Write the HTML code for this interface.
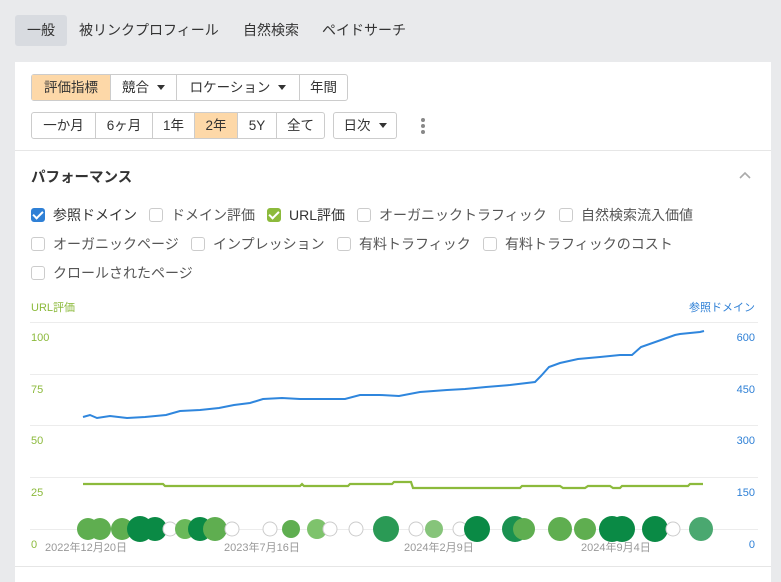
<!DOCTYPE html>
<html><head><meta charset="utf-8"><style>
body{margin:0;width:781px;height:578px;background:#e9eaec;font-family:"Liberation Sans","Noto Sans CJK JP",sans-serif;position:relative;overflow:hidden;color:#333}
.tab{position:absolute;top:15px;height:31px;line-height:31px;font-size:14px;color:#333}
.card{position:absolute;left:15px;top:62px;width:756px;height:520px;background:#fff}
.grp{position:absolute;display:flex;border:1px solid #ccc;border-radius:3px;height:25px;font-size:13.5px;line-height:25px;background:#fff}
.grp div{border-left:1px solid #ccc;text-align:center;box-sizing:border-box}
.grp div:first-child{border-left:none}
.on{background:#fdd8a8}
.tri{display:inline-block;border-left:4px solid transparent;border-right:4px solid transparent;border-top:5px solid #333;margin-left:8px;vertical-align:2px}
.cb{position:absolute;font-size:14px;color:#555;display:flex;align-items:center}
.cb i{display:inline-block;width:12px;height:12px;border:1px solid #ccc;border-radius:3px;margin-right:8px;position:relative}
.cb i.b{background:#2f80d6;border-color:#2f80d6}
.cb i.g{background:#8cba3c;border-color:#8cba3c}
.cb i.b:after,.cb i.g:after{content:"";position:absolute;left:3px;top:0px;width:4px;height:8px;border:solid #fff;border-width:0 2px 2px 0;transform:rotate(45deg)}
.yl{position:absolute;font-size:11px;color:#8cba3c}
.yr{position:absolute;font-size:11px;color:#2f80d6;text-align:right;right:26px}
.xl{position:absolute;top:539px;font-size:11px;color:#999}
</style></head><body>
<div class="tab" style="left:15px;width:52px;background:#d8dbe0;border-radius:3px;text-align:center">一般</div>
<div class="tab" style="left:79px">被リンクプロフィール</div>
<div class="tab" style="left:243px">自然検索</div>
<div class="tab" style="left:322px">ペイドサーチ</div>
<div class="card"></div>
<div class="grp" style="left:31px;top:74px"><div class="on" style="width:78px">評価指標</div><div style="width:66px">競合<span class="tri"></span></div><div style="width:123px">ロケーション<span class="tri"></span></div><div style="width:48px">年間</div></div>
<div class="grp" style="left:31px;top:112px"><div style="width:63px">一か月</div><div style="width:57px">6ヶ月</div><div style="width:42px">1年</div><div class="on" style="width:43px">2年</div><div style="width:39px">5Y</div><div style="width:48px">全て</div></div>
<div class="grp" style="left:333px;top:112px"><div style="width:62px">日次<span class="tri"></span></div></div>
<div style="position:absolute;left:421px;top:118px;width:4px;font-size:0"><div style="width:4px;height:4px;border-radius:2px;background:#888;margin-bottom:2px"></div><div style="width:4px;height:4px;border-radius:2px;background:#888;margin-bottom:2px"></div><div style="width:4px;height:4px;border-radius:2px;background:#888"></div></div>
<div style="position:absolute;left:15px;top:150px;width:756px;height:1px;background:#e6e6e6"></div>
<div style="position:absolute;left:31px;top:166px;font-size:14.5px;font-weight:bold;color:#333">パフォーマンス</div>
<svg style="position:absolute;left:738px;top:170px" width="14" height="10"><path d="M2 8 L7 3 L12 8" fill="none" stroke="#aaa" stroke-width="1.6"/></svg>
<div class="cb" style="left:31px;top:205px;color:#333"><i class="b"></i>参照ドメイン</div>
<div class="cb" style="left:149px;top:205px"><i></i>ドメイン評価</div>
<div class="cb" style="left:267px;top:205px;color:#333"><i class="g"></i>URL評価</div>
<div class="cb" style="left:357px;top:205px"><i></i>オーガニックトラフィック</div>
<div class="cb" style="left:559px;top:205px"><i></i>自然検索流入価値</div>
<div class="cb" style="left:31px;top:234px"><i></i>オーガニックページ</div>
<div class="cb" style="left:191px;top:234px"><i></i>インプレッション</div>
<div class="cb" style="left:337px;top:234px"><i></i>有料トラフィック</div>
<div class="cb" style="left:483px;top:234px"><i></i>有料トラフィックのコスト</div>
<div class="cb" style="left:31px;top:263px"><i></i>クロールされたページ</div>
<div class="yl" style="left:31px;top:299px">URL評価</div>
<div class="yr" style="top:299px;right:26px">参照ドメイン</div>
<svg style="position:absolute;left:0;top:0" width="781" height="578">
<g stroke="#ececec" stroke-width="1"><line x1="30" y1="322.5" x2="758" y2="322.5"/><line x1="30" y1="374.5" x2="758" y2="374.5"/><line x1="30" y1="425.5" x2="758" y2="425.5"/><line x1="30" y1="477.5" x2="758" y2="477.5"/><line x1="30" y1="529.5" x2="758" y2="529.5"/></g>
<polyline fill="none" stroke="#2f86dd" stroke-width="2" points="83,417 90,415 97,418 110,416 127,418 145,417 166,415 180,411 200,410 219,408 234,405 250,403 263,399 282,398 300,399 345,399 360,395 380,395 399,396 420,392 447,390 465,389 486,387 510,385 535,382 541,376 549,367 560,363 578,359 600,357 620,355 632,355 641,347 661,340 675,335 680,334 690,333 700,332 704,331"/>
<polyline fill="none" stroke="#8cba3c" stroke-width="2.2" points="83,484 163,484 165,486 300,486 302,484 304,486 348,486 350,484 392,484 394,482 411,482 413,488 520,488 522,486 560,486 563,488 585,488 588,486 610,486 613,488 620,488 622,486 688,486 690,484 703,484"/>
<g>
<circle cx="88" cy="529" r="11" fill="#5fae50"/><circle cx="100" cy="529" r="11" fill="#5fae50"/><circle cx="122" cy="529" r="11" fill="#5fae50"/><circle cx="140" cy="529" r="13" fill="#0a8a45"/><circle cx="155" cy="529" r="12" fill="#0a8a45"/><circle cx="170" cy="529" r="7" fill="#fff" stroke="#ccc"/><circle cx="185" cy="529" r="10" fill="#6ab85a"/><circle cx="200" cy="529" r="12" fill="#0a8a45"/><circle cx="215" cy="529" r="12" fill="#5fae50"/><circle cx="232" cy="529" r="7" fill="#fff" stroke="#ccc"/><circle cx="270" cy="529" r="7" fill="#fff" stroke="#ccc"/><circle cx="291" cy="529" r="9" fill="#5fae50"/><circle cx="317" cy="529" r="10" fill="#7ec36c"/><circle cx="330" cy="529" r="7" fill="#fff" stroke="#ccc"/><circle cx="356" cy="529" r="7" fill="#fff" stroke="#ccc"/><circle cx="386" cy="529" r="13" fill="#2a9a55"/><circle cx="416" cy="529" r="7" fill="#fff" stroke="#ccc"/><circle cx="434" cy="529" r="9" fill="#86c47a"/><circle cx="460" cy="529" r="7" fill="#fff" stroke="#ccc"/><circle cx="477" cy="529" r="13" fill="#0a8a45"/><circle cx="515" cy="529" r="13" fill="#1a9150"/><circle cx="524" cy="529" r="11" fill="#5fae50"/><circle cx="560" cy="529" r="12" fill="#5fae50"/><circle cx="585" cy="529" r="11" fill="#5fae50"/><circle cx="612" cy="529" r="13" fill="#0a8a45"/><circle cx="622" cy="529" r="13" fill="#0a8a45"/><circle cx="655" cy="529" r="13" fill="#0a8a45"/><circle cx="673" cy="529" r="7" fill="#fff" stroke="#ccc"/><circle cx="701" cy="529" r="12" fill="#4aa870"/>
</g>
</svg>
<div class="yl" style="left:31px;top:332px">100</div><div class="yl" style="left:31px;top:384px">75</div><div class="yl" style="left:31px;top:435px">50</div><div class="yl" style="left:31px;top:487px">25</div><div class="yl" style="left:31px;top:539px">0</div>
<div class="yr" style="top:332px">600</div><div class="yr" style="top:384px">450</div><div class="yr" style="top:435px">300</div><div class="yr" style="top:487px">150</div><div class="yr" style="top:539px">0</div>
<div class="xl" style="left:45px">2022年12月20日</div><div class="xl" style="left:224px">2023年7月16日</div><div class="xl" style="left:404px">2024年2月9日</div><div class="xl" style="left:581px">2024年9月4日</div>
<div style="position:absolute;left:15px;top:566px;width:756px;height:1px;background:#e6e6e6"></div>
</body></html>
